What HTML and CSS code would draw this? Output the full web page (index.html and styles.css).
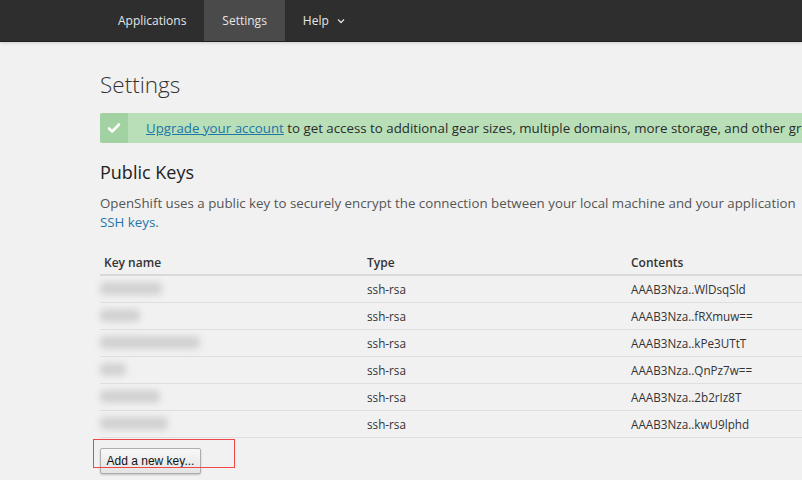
FILE: index.html
```html
<!DOCTYPE html>
<html>
<head>
<meta charset="utf-8">
<link rel="stylesheet" href="styles.css">
</head>
<body>
<header class="nav">
  <div class="nav-inner">
    <a class="nav-item">Applications</a>
    <a class="nav-item active">Settings</a>
    <a class="nav-item">Help <svg class="caret" width="8" height="6" viewBox="0 0 8 6"><path d="M1 1.5 L4 4.5 L7 1.5" fill="none" stroke="#ddd" stroke-width="1.3"/></svg></a>
  </div>
</header>
<main class="content">
  <h1 class="title">Settings</h1>
  <div class="alert">
    <div class="alert-icon"><svg width="14" height="12" viewBox="0 0 14 12"><path d="M2 6.5 L5.2 9.5 L12 2.5" fill="none" stroke="#fff" stroke-width="2.6" stroke-linecap="round" stroke-linejoin="round"/></svg></div>
    <div class="alert-text"><a class="link-u">Upgrade your account</a> to get access to additional gear sizes, multiple domains, more storage, and other great features.</div>
  </div>
  <h2 class="section">Public Keys</h2>
  <div class="desc">
    <div class="desc-line">OpenShift uses a public key to securely encrypt the connection between your local machine and your application</div>
    <a class="link">SSH keys.</a>
  </div>
  <table class="keys">
    <thead>
      <tr><th class="c1">Key name</th><th class="c2">Type</th><th class="c3">Contents</th></tr>
    </thead>
    <tbody>
      <tr><td><span class="blur b1"></span></td><td>ssh-rsa</td><td>AAAB3Nza..WlDsqSld</td></tr>
      <tr><td><span class="blur b2"></span></td><td>ssh-rsa</td><td>AAAB3Nza..fRXmuw==</td></tr>
      <tr><td><span class="blur b3"></span></td><td>ssh-rsa</td><td>AAAB3Nza..kPe3UTtT</td></tr>
      <tr><td><span class="blur b4"></span></td><td>ssh-rsa</td><td>AAAB3Nza..QnPz7w==</td></tr>
      <tr><td><span class="blur b5"></span></td><td>ssh-rsa</td><td>AAAB3Nza..2b2rIz8T</td></tr>
      <tr><td><span class="blur b6"></span></td><td>ssh-rsa</td><td>AAAB3Nza..kwU9lphd</td></tr>
    </tbody>
  </table>
  <div class="actions">
    <button class="btn">Add a new key...</button>
    <div class="annot"></div>
  </div>
</main>
</body>
</html>
```
FILE: styles.css
```css
* { box-sizing: border-box; }
html, body { margin: 0; padding: 0; }
body {
  background: #f1f1f1;
  font-family: "Open Sans", "DejaVu Sans", sans-serif;
  color: #333;
  width: 802px;
  height: 480px;
  overflow: hidden;
}
.nav {
  height: 42px;
  background: #2e2e2e;
  border-bottom: 1px solid #1f1f1f;
  box-shadow: 0 1px 3px rgba(0,0,0,0.15);
}
.nav-inner {
  display: flex;
  padding-left: 100px;
  height: 41px;
}
.nav-item {
  display: flex;
  align-items: center;
  gap: 6px;
  padding: 0 18px;
  color: #e6e6e6;
  font-size: 12px;
  height: 41px;
}
.nav-item.active { background: #4a4a4a; }
.caret { margin-left: 2px; margin-top: 1px; }
.content {
  padding-left: 100px;
  position: relative;
  white-space: nowrap;
  overflow: hidden;
}
.title {
  margin: 28px 0 0;
  font-size: 22.5px;
  font-weight: 300;
  color: #333;
  line-height: 30px;
  height: 43px;
}
.alert {
  display: flex;
  height: 30px;
  background: #b9dfb9;
  border-radius: 2px 0 0 2px;
  width: 702px;
  overflow: hidden;
}
.alert-icon {
  flex: 0 0 28px;
  width: 28px;
  background: #a2d2a2;
  display: flex;
  align-items: center;
  justify-content: center;
  border-radius: 2px 0 0 2px;
}
.alert-text {
  padding-left: 18px;
  font-size: 13.3px;
  line-height: 30px;
  color: #2b2b2b;
}
.link-u { color: #1d76a8; text-decoration: underline; }
.link { color: #1d76a8; }
.section {
  margin: 17px 0 0;
  font-size: 18px;
  font-weight: 400;
  color: #222;
  line-height: 24px;
}
.desc {
  margin-top: 10px;
  font-size: 13.3px;
  line-height: 19px;
  color: #555;
}
.desc .link { display: block; }
.keys {
  margin-top: 19px;
  border-collapse: collapse;
  width: 800px;
  font-size: 11.7px;
  color: #333;
}
.keys th {
  text-align: left;
  font-weight: 600;
  font-size: 12px;
  padding: 0 4px;
  height: 24px;
  vertical-align: middle;
  border-bottom: 2px solid #d9d9d9;
}
.keys td {
  padding: 0 4px;
  height: 27px;
  vertical-align: middle;
  border-bottom: 1px solid #dedede;
}
.keys .c1 { width: 263px; }
.keys .c2 { width: 264px; }
.blur {
  display: block;
  height: 13px;
  background: #d2d2d2;
  filter: blur(3px);
  border-radius: 5px;
  margin-left: -4px;
}
.b1 { width: 62px; }
.b2 { width: 40px; }
.b3 { width: 100px; }
.b4 { width: 26px; }
.b5 { width: 60px; }
.b6 { width: 68px; }
.actions {
  position: relative;
  padding-top: 10px;
  padding-bottom: 10px;
}
.btn {
  font-family: "Liberation Sans", Arial, sans-serif;
  font-size: 12px;
  color: #111;
  height: 26px;
  width: 101px;
  border: 1px solid #adadad;
  border-radius: 2px;
  background: linear-gradient(#f8f8f8, #e3e3e3);
  box-shadow: 0 1px 2px rgba(0,0,0,0.2);
  padding: 0;
}
.annot {
  position: absolute;
  left: -7px;
  top: 1px;
  width: 142px;
  height: 29px;
  border: 1px solid #ef4646;
}
```
